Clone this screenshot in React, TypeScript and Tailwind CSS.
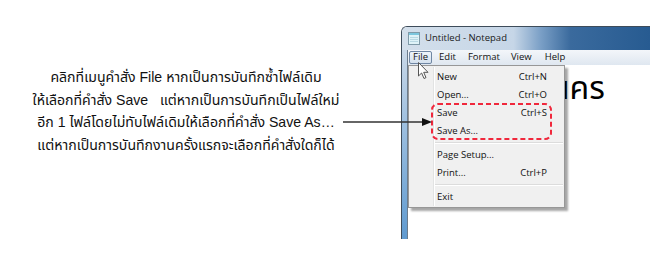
import React from "react";

const ui = { fontFamily: '"Open Sans", "Noto Sans", sans-serif' };
const thai = { fontFamily: '"Liberation Sans", "Noto Sans Thai", "Noto Sans", sans-serif' };

function NotepadIcon() {
  return (
    <svg width="12" height="13" viewBox="0 0 12 13">
      <rect x="0.5" y="0.5" width="11" height="12" fill="#dff3f8" stroke="#7f9aa8" />
      <rect x="1" y="1" width="10" height="2" fill="#7cc7de" />
      <line x1="2" y1="5.5" x2="10" y2="5.5" stroke="#b9d9e4" />
      <line x1="2" y1="7.5" x2="10" y2="7.5" stroke="#b9d9e4" />
      <line x1="2" y1="9.5" x2="10" y2="9.5" stroke="#b9d9e4" />
    </svg>
  );
}

function Item({ label, shortcut }: { label: string; shortcut?: string }) {
  return (
    <div className="flex h-[18px] items-center pl-[28px] pr-[17px] text-[9.5px] text-[#111]">
      <span className="flex-1">{label}</span>
      {shortcut && <span>{shortcut}</span>}
    </div>
  );
}

function Sep() {
  return (
    <div className="flex h-[6px] items-center pl-[26px] pr-[1px]">
      <div className="h-[2px] w-full border-t border-b border-t-[#dcdcdc] border-b-white" />
    </div>
  );
}

export default function App() {
  return (
    <div className="relative flex h-[280px] w-[650px] overflow-hidden bg-white">
      {/* Left explanation text */}
      <div className="w-[401px] shrink-0">
        <div
          className="w-[372px] pt-[66px] text-center text-[14.1px] leading-[22.5px] text-[#111] whitespace-pre"
          style={thai}
        >
          <div>คลิกที่เมนูคำสั่ง File หากเป็นการบันทึกซ้ำไฟล์เดิม</div>
          <div>ให้เลือกที่คำสั่ง Save   แต่หากเป็นการบันทึกเป็นไฟล์ใหม่</div>
          <div>อีก 1 ไฟล์โดยไม่ทับไฟล์เดิมให้เลือกที่คำสั่ง Save As…</div>
          <div>แต่หากเป็นการบันทึกงานครั้งแรกจะเลือกที่คำสั่งใดก็ได้</div>
        </div>
      </div>

      {/* Notepad window */}
      <div className="flex-1 pt-[26px]">
        <div className="flex h-[213px] flex-col overflow-hidden rounded-tl-[6px] border-l border-t border-[#3e4c5a]">
          <div
            className="flex h-[23px] items-center gap-[5px] pl-[6px] bg-[linear-gradient(to_right,#d3dfeb_0%,#c6d6e7_45%,#7a9fc6_56%,#3a6a9d_68%,#275b91_100%)]"
            style={ui}
          >
            <NotepadIcon />
            <span className="text-[9.5px] text-[#1a1a1a]">Untitled - Notepad</span>
          </div>
          <div className="flex flex-1">
            <div className="w-[5px] bg-[linear-gradient(to_bottom,#c9d8e8,#9dbfdf_40%,#5f9ad0)]" />
            <div className="flex flex-1 flex-col border-l border-[#6c7c8c]">
              <div
                className="flex h-[16px] items-center border-b border-white bg-[linear-gradient(to_bottom,#f3f6fa,#dfe7f0)] text-[9.5px] text-[#111]"
                style={ui}
              >
                <div className="ml-[1px] flex h-[13px] items-center rounded-[2px] border border-[#6f86a3] bg-[linear-gradient(to_bottom,#eef4fa,#d5e1ee)] px-[3px]">
                  File
                </div>
                <span className="ml-[7px]">Edit</span>
                <span className="ml-[12px]">Format</span>
                <span className="ml-[11px]">View</span>
                <span className="ml-[13px]">Help</span>
              </div>
              <div className="relative flex-1 bg-white">
                <div
                  className="pl-[142px] pt-[3px] text-[32px] leading-[38px] text-black whitespace-nowrap"
                  style={thai}
                >
                  นคร
                </div>

                {/* Dropdown menu */}
                <div
                  className="absolute left-0 top-[-1px] w-[157px] border border-[#979797] bg-[#f0f0f0] pt-[2px] pb-[1px] shadow-[3px_3px_2px_rgba(0,0,0,0.35)]"
                  style={ui}
                >
                  <div className="absolute bottom-[1px] left-[24px] top-[1px] w-[2px] border-l border-r border-l-[#e2e3e3] border-r-white" />
                  <div className="relative">
                    <Item label="New" shortcut="Ctrl+N" />
                    <Item label="Open..." shortcut="Ctrl+O" />
                    <Item label="Save" shortcut="Ctrl+S" />
                    <Item label="Save As..." />
                    <Sep />
                    <Item label="Page Setup..." />
                    <Item label="Print..." shortcut="Ctrl+P" />
                    <Sep />
                    <Item label="Exit" />
                  </div>
                  {/* red dashed highlight */}
                  <svg className="absolute left-[22px] top-[37px]" width="121" height="37" viewBox="0 0 121 37">
                    <rect x="1" y="1" width="119" height="35" rx="6" ry="6" fill="none" stroke="#f0283c" strokeWidth="2" strokeDasharray="5 3" />
                  </svg>
                </div>
              </div>
            </div>
          </div>
        </div>
      </div>

      {/* Arrow from text to menu */}
      <svg className="absolute left-[343px] top-[117px]" width="89" height="10" viewBox="0 0 89 10">
        <line x1="0" y1="5" x2="81" y2="5" stroke="#333" strokeWidth="1.6" />
        <polygon points="79,1 89,5 79,9" fill="#111" />
      </svg>

      {/* Mouse cursor */}
      <svg className="absolute left-[418px] top-[62px]" width="12" height="18" viewBox="0 0 12 18">
        <path
          d="M0.5 0.5 L0.5 14 L3.6 11 L6 16.5 L8 15.6 L5.7 10.3 L10 10.3 Z"
          fill="#fff"
          stroke="#555"
          strokeWidth="1"
          strokeLinejoin="round"
        />
      </svg>
    </div>
  );
}
